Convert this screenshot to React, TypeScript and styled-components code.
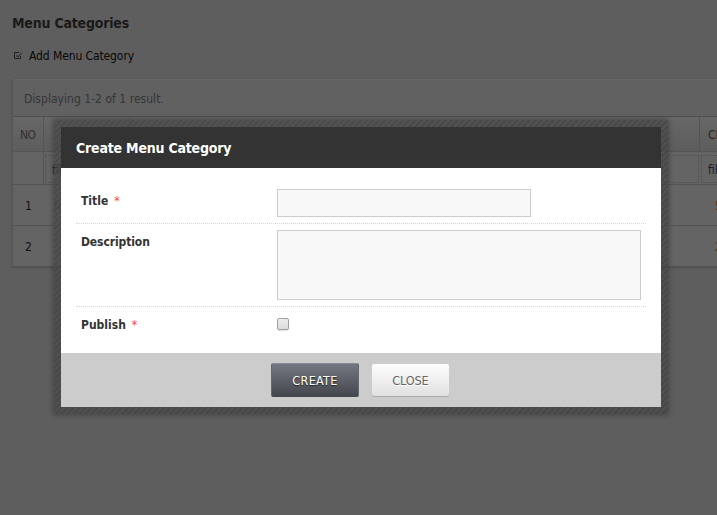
import React from 'react';
import styled, { createGlobalStyle } from 'styled-components';

const Global = createGlobalStyle`
  * { box-sizing: border-box; }
  html, body { margin: 0; height: 100%; overflow: hidden; background: #5e5e5e; }
  body {
    font-family: "DejaVu Sans Condensed", "DejaVu Sans", sans-serif;
    font-stretch: condensed;
    font-size: 12px;
    color: #2b2b2b;
  }
`;

const Page = styled.div`
  position: relative;
  width: 717px;
  height: 515px;
  overflow: hidden;
  padding: 14px 0 0 12px;
`;
const Fit = styled.span<{ $ls?: number }>`
  letter-spacing: ${p => p.$ls ?? 0}px;
  white-space: nowrap;
`;
const PageTitle = styled.h1`
  margin: 0;
  height: 18px;
  line-height: 18px;
  font-size: 14px;
  font-weight: bold;
  color: #191919;
`;
const AddLink = styled.div`
  display: flex;
  align-items: center;
  height: 18px;
  margin-top: 15px;
  color: #080808;
  svg { margin: 0 6px 0 1px; }
`;
const Grid = styled.section`
  margin-top: 14px;
  width: 760px;
  border-left: 1px solid #555;
  border-top: 1px solid #656565;
  border-bottom: 2px solid #525252;
  background: #616161;
  box-shadow: 0 0 2px #545454;
`;
const Summary = styled.div`
  height: 37px;
  line-height: 38px;
  padding-left: 11px;
  color: #353535;
  border-bottom: 1px solid #4f4f4f;
`;
const Row = styled.div<{ $h: number; $head?: boolean; $last?: boolean }>`
  display: grid;
  grid-template-columns: 31px 656px 72px;
  height: ${p => p.$h}px;
  background: ${p => (p.$head ? 'linear-gradient(#676767, #5d5d5d)' : '#646464')};
  border-bottom: ${p => (p.$last ? 0 : 1)}px solid #545454;
`;
const Cell = styled.div<{ $pad?: number; $rule?: boolean; $color?: string }>`
  display: flex;
  align-items: center;
  padding-top: 1px;
  padding-left: ${p => p.$pad ?? 8}px;
  color: ${p => p.$color ?? '#202020'};
  border-right: ${p => (p.$rule ? '1px solid #555' : '0')};
`;
const Split = styled.div`
  width: 86px;
  height: 100%;
  border-right: 1px solid #555;
`;
const FilterBox = styled.div`
  flex: 1;
  height: 28px;
  line-height: 28px;
  margin: 0 1px;
  padding-left: 6px;
  border: 1px dotted #505050;
`;

const Dialog = styled.div`
  position: absolute;
  left: 54px;
  top: 120px;
  width: 614px;
  height: 294px;
  padding: 7px;
  border-radius: 2px;
  background: repeating-linear-gradient(135deg, rgba(62,62,62,.7) 0 2.1px, rgba(72,72,72,.7) 2.1px 4.243px);
  box-shadow: 0 0 5px 1px rgba(50,50,50,.6);
`;
const Header = styled.header`
  height: 41px;
  padding-left: 15px;
  line-height: 42px;
  background: #333;
  color: #fff;
  font-size: 14px;
  font-weight: bold;
`;
const Form = styled.div`
  height: 185px;
  padding: 15px 15px 0;
  background: #fff;
`;
const Field = styled.div<{ $h: number; $last?: boolean }>`
  display: flex;
  align-items: flex-start;
  height: ${p => p.$h}px;
  padding: 6px 0 0 5px;
  border-bottom: ${p => (p.$last ? '0' : '1px dotted #d6d6d6')};
`;
const Label = styled.label`
  width: 196px;
  padding-top: 4px;
  line-height: 17px;
  font-weight: bold;
  color: #333;
`;
const Star = styled.span`
  margin-left: 6px;
  font-weight: normal;
  color: #ff4545;
`;
const Input = styled.input`
  width: 254px;
  height: 28px;
  margin: 0;
  border: 1px solid #ccc;
  background: #f8f8f8;
  outline: 0;
`;
const Area = styled.textarea`
  width: 364px;
  height: 70px;
  margin: 0;
  resize: none;
  border: 1px solid #ccc;
  background: #f8f8f8;
  outline: 0;
`;
const Check = styled.input`
  appearance: none;
  width: 12px;
  height: 12px;
  margin: 5px 0 0;
  border: 1px solid #a0a0a0;
  border-radius: 2px;
  background: linear-gradient(#ededed, #dcdcdc);
  box-shadow: 0 1px 1px rgba(0,0,0,.12);
`;
const Footer = styled.footer`
  display: flex;
  align-items: flex-start;
  height: 54px;
  padding: 10px 0 0 210px;
  gap: 13px;
  background: #ccc;
`;
const Button = styled.button<{ $primary?: boolean }>`
  width: ${p => (p.$primary ? 88 : 77)}px;
  height: ${p => (p.$primary ? 34 : 33)}px;
  margin-top: ${p => (p.$primary ? 0 : 1)}px;
  padding: 0;
  border: ${p => (p.$primary ? '1px solid #626975' : '0')};
  border-top-color: #858b96;
  border-bottom-color: #44474f;
  border-radius: 2px;
  background: ${p => (p.$primary ? 'linear-gradient(#747780, #45474f)' : 'linear-gradient(#fdfdfd, #e0e0e0)')};
  box-shadow: ${p => (p.$primary ? 'none' : 'inset 0 -1px #aaa')};
  color: ${p => (p.$primary ? '#fff' : '#666')};
  text-shadow: ${p => (p.$primary ? '0 1px 1px #222' : '0 1px #fff')};
  font: 12.5px "DejaVu Sans Condensed", "DejaVu Sans", sans-serif;
  font-stretch: condensed;
`;

const EditIcon = () => (
  <svg width="10" height="10" viewBox="0 0 10 10" fill="none" stroke="#202020">
    <path d="M6 1.5H1.5v6h6V5" />
    <path d="M4 4v1.5h1.5L8.7 1.7" />
  </svg>
);

export default function App() {
  return (
    <>
      <Global />
      <Page>
        <PageTitle><Fit $ls={-0.2}>Menu Categories</Fit></PageTitle>
        <AddLink><EditIcon /><Fit $ls={-0.1}>Add Menu Category</Fit></AddLink>
        <Grid>
          <Summary><Fit $ls={0.03}>Displaying 1-2 of 1 result.</Fit></Summary>
          <Row $h={35} $head>
            <Cell $rule $pad={7} $color="#303030"><Fit $ls={-0.5}>NO</Fit></Cell>
            <Cell $rule $pad={0}><Split /></Cell>
            <Cell $color="#252525">CREATION</Cell>
          </Row>
          <Row $h={33}>
            <Cell $rule />
            <Cell $pad={0}><FilterBox>filter</FilterBox></Cell>
            <Cell $pad={0}><FilterBox>filter</FilterBox></Cell>
          </Row>
          <Row $h={41}>
            <Cell $pad={12} $color="#111">1</Cell>
            <Cell $pad={10} $color="#404040">footer</Cell>
            <Cell $pad={15} $color="#57320c">5</Cell>
          </Row>
          <Row $h={40} $last>
            <Cell $pad={12} $color="#111">2</Cell>
            <Cell $pad={16} $color="#404040">main</Cell>
            <Cell $pad={15} $color="#57320c">2</Cell>
          </Row>
        </Grid>
        <Dialog role="dialog">
          <Header><Fit $ls={-0.2}>Create Menu Category</Fit></Header>
          <Form>
            <Field $h={41}>
              <Label><Fit>Title</Fit><Star>*</Star></Label>
              <Input />
            </Field>
            <Field $h={83}>
              <Label><Fit $ls={-0.1}>Description</Fit></Label>
              <Area />
            </Field>
            <Field $h={40} $last>
              <Label><Fit>Publish</Fit><Star>*</Star></Label>
              <Check type="checkbox" />
            </Field>
          </Form>
          <Footer>
            <Button $primary><Fit $ls={0.3}>CREATE</Fit></Button>
            <Button><Fit $ls={-0.1}>CLOSE</Fit></Button>
          </Footer>
        </Dialog>
      </Page>
    </>
  );
}
